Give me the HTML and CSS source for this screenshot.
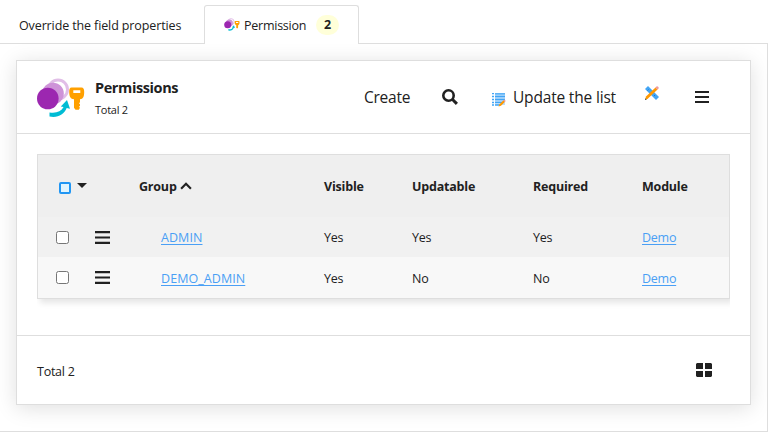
FILE: index.html
```html
<!DOCTYPE html>
<html lang="en">
<head>
<meta charset="utf-8">
<title>Permissions</title>
<link rel="stylesheet" href="styles.css">
</head>
<body>
<svg class="defs" aria-hidden="true">
  <symbol id="perm" viewBox="0 0 48 40">
    <circle cx="21" cy="11.500" r="9.500" fill="none" stroke="#e1bee7" stroke-width="3"/>
    <circle cx="16" cy="15.500" r="10.800" fill="#ce93d8"/>
    <circle cx="10.800" cy="20.500" r="10.800" fill="#9c27b0"/>
    <path d="M12.500 34.500v4c8 1.500 14.500-1.500 17.200-8.500l3.300.8-3-8.800-6.200 6.500 2.800.6c-2.500 4.700-7.500 6.400-14.100 5.400z" fill="#00bcd4"/>
    <path fill-rule="evenodd" d="M34.500 9.500h10c2 0 2.700 1.500 2.700 4.500 0 4.500-1 7-4.200 7.300v3l-1 1 1 1v1.500l-1 1 1 1-1.200 2h-3.300l-1.500-2v-8.500c-3.500-.3-4.800-2.800-4.800-7.300 0-3 .5-4.500 2.300-4.500zm1.800 2.800v2.700h7v-2.700z" fill="#ffa000"/>
  </symbol>
  <symbol id="bars" viewBox="0 0 14 12">
    <path d="M0 0h14v2H0zM0 5h14v2H0zM0 10h14v2H0z" fill="#212121"/>
  </symbol>
</svg>
<nav class="tabs">
  <div class="tab"><span class="tab-text">Override the field properties</span></div>
  <div class="tab active"><svg class="tab-icon"><use href="#perm"/></svg><span class="tab-label">Permission</span><span class="badge">2</span></div>
</nav>
<main class="panel">
  <section class="card">
    <header class="head">
      <svg class="logo"><use href="#perm"/></svg>
      <div class="titles"><h1>Permissions</h1><p>Total 2</p></div>
      <span class="action create">Create</span>
      <svg class="search" viewBox="0 0 16 16"><circle cx="6.500" cy="6.500" r="5.200" fill="none" stroke="#212121" stroke-width="2.600"/><path d="M10.300 10.300l4.600 4.600" stroke="#212121" stroke-width="3"/></svg>
      <svg class="list" viewBox="0 0 14 14"><path d="M3 0h10v12H3z" fill="#bbdefb"/><path d="M0 .5h2M0 3.500h2M0 6.500h2M0 9.500h2M0 12h2M3 .8h10M3 3.500h10M3 6.500h10M3 9.300h8M3 12h5" stroke="#42a5f5" stroke-width="1.300"/><path d="M6.500 13.500l1-2.300 4-4 1.500 1.500-4 4z" fill="#ff9800"/><path d="M11.300 7.400l1-1 1.500 1.500-1 1z" fill="#ef9a9a"/></svg>
      <span class="action update">Update the list</span>
      <svg class="tools" viewBox="0 0 14 14"><path d="M0 3l3-3 11 11-3 3z" fill="#42a5f5"/><path d="M2.500 4.500l1-1M9 10l1-1" stroke="#1976d2"/><path d="M0 14l1-3.500 9.500-9 2 2-9.500 9z" fill="#ff9800"/><path d="M10.300 1.700l1.200-1.200c1-.8 2.800.8 2 2l-1.200 1.200z" fill="#ef9a9a"/><path d="M0 14l.5-1.800 1.300 1.300z" fill="#37474f"/></svg>
      <svg class="menu"><use href="#bars"/></svg>
    </header>
    <div class="body">
      <table>
        <colgroup><col class="c-check"><col class="c-menu"><col class="c-group"><col class="c-visible"><col class="c-updatable"><col class="c-required"><col></colgroup>
        <thead><tr>
          <th colspan="2"><div class="select"><span class="select-box"></span><svg class="caret" viewBox="0 0 10 5"><path d="M0 0h10L5 5z" fill="#212121"/></svg></div></th>
          <th><span class="t-group">Group</span><svg class="sort" viewBox="0 0 11 7"><path d="M1 6l4.500-4.500L10 6" fill="none" stroke="#212121" stroke-width="2"/></svg></th>
          <th>Visible</th><th>Updatable</th><th>Required</th><th>Module</th>
        </tr></thead>
        <tbody>
          <tr><td><span class="check"></span></td><td><svg class="row-menu"><use href="#bars"/></svg></td><td class="name"><a href="#">ADMIN</a></td><td>Yes</td><td>Yes</td><td>Yes</td><td><a href="#">Demo</a></td></tr>
          <tr><td><span class="check"></span></td><td><svg class="row-menu"><use href="#bars"/></svg></td><td class="name"><a href="#">DEMO_ADMIN</a></td><td>Yes</td><td>No</td><td>No</td><td><a href="#">Demo</a></td></tr>
        </tbody>
      </table>
    </div>
    <footer class="foot"><span>Total 2</span><svg class="grid" viewBox="0 0 16 14"><path d="M1 0h6v6H0V1zM9 0h6l1 1v5H9zM0 8h7v6H1l-1-1zM9 8h7v5l-1 1H9z" fill="#212121"/></svg></footer>
  </section>
</main>
</body>
</html>
```

FILE: styles.css
```css
* { box-sizing: border-box; }
body {
  margin: 0;
  width: 776px;
  height: 441px;
  overflow: hidden;
  background: #fff;
  color: #212121;
  font: 12.5px/18px "Open Sans", "Noto Sans", sans-serif;
  letter-spacing: -0.25px;
}
svg { display: block; flex: none; }
.defs { position: absolute; width: 0; height: 0; }
.tabs {
  display: flex;
  width: 768px;
  height: 44px;
  padding-top: 5px;
  border-bottom: 1px solid #dedede;
}
.tab {
  display: flex;
  align-items: center;
  width: 204px;
  height: 39px;
  padding: 2px 0 0 19px;
  white-space: nowrap;
}
.tab.active {
  width: 155px;
  background: #fff;
  border: 1px solid #dedede;
  border-bottom: 0;
  border-radius: 3px 3px 0 0;
  padding: 0 0 0 19px;
}
.tab-text { letter-spacing: -.12px; }
.tab-icon { width: 16px; height: 13px; margin: 0 4px 2px 0; }
.tab-label { padding-top: 1px; width: 62px; }
.badge {
  width: 23px;
  height: 20px;
  margin-left: 10px;
  border-radius: 10px;
  background: #ffffd9;
  font-weight: 700;
  line-height: 20px;
  text-align: center;
}
.panel {
  width: 768px;
  height: 388px;
  padding: 16px;
  border: solid #dedede;
  border-width: 0 1px 1px 0;
  overflow: hidden;
}
.card {
  width: 735px;
  height: 345px;
  border: 1px solid #dedede;
  background: #fff;
  box-shadow: 0 3px 20px rgba(0, 0, 0, .13);
}
.head {
  display: flex;
  align-items: center;
  height: 73px;
  padding-left: 20px;
  border-bottom: 1px solid #dedede;
}
.logo { width: 48px; height: 40px; margin-top: 1px; }
.titles { width: 269px; margin-left: 10px; padding-top: 2px; }
h1 { margin: 0; font-size: 14.500px; line-height: 22px; letter-spacing: -.4px; }
p { margin: 1px 0 0; font-size: 11px; line-height: 20px; }
.action { font-size: 15.500px; line-height: 22px; white-space: nowrap; }
.create { width: 78px; }
.search { width: 16px; height: 16px; }
.list { width: 14px; height: 14px; margin: 5px 7px 0 34px; }
.update { width: 132px; letter-spacing: -.18px; }
.tools { width: 14px; height: 14px; margin-bottom: 8px; }
.menu { width: 14px; height: 12px; margin-left: 36px; }
.body {
  width: 693px;
  height: 201px;
  margin-left: 20px;
  padding-top: 20px;
  overflow: hidden;
}
table {
  width: 693px;
  table-layout: fixed;
  border-collapse: separate;
  border-spacing: 0;
  border: 1px solid #dedede;
  box-shadow: 3px 4px 6px rgba(0, 0, 0, .1);
}
.c-check { width: 57px; }
.c-menu { width: 44px; }
.c-group { width: 185px; }
.c-visible { width: 88px; }
.c-updatable { width: 121px; }
.c-required { width: 109px; }
th, td { padding: 0; text-align: left; white-space: nowrap; }
th { height: 62px; background: #efefef; padding-top: 1px; letter-spacing: -.2px; }
tbody tr { background: #f1f1f1; }
tbody tr:last-child { background: #f8f8f8; }
td { height: 40px; padding-top: 2px; }
td:nth-child(-n+2) { padding-top: 0; }
tbody tr:last-child td { height: 41px; }
a { color: #4a9ff5; text-underline-offset: 2px; }
td.name { padding-left: 22px; letter-spacing: .07px; }
.select { display: flex; padding-left: 21px; }
.select-box { width: 12px; height: 12px; margin-top: 3px; border: 2px solid #2196f3; border-radius: 2px; background: #e1f5fe; }
.caret { width: 10px; height: 5px; margin: 4px 0 0 6px; }
.sort { display: inline-block; width: 12px; height: 8px; margin-left: 3px; vertical-align: 1px; }
.check { display: block; width: 13px; height: 13px; margin-left: 18px; border: 1px solid #767676; border-radius: 2.500px; background: #fff; }
.row-menu { width: 15px; height: 13px; }
.foot {
  display: flex;
  justify-content: space-between;
  align-items: center;
  height: 69px;
  padding: 3px 38px 0 20px;
  border-top: 1px solid #dedede;
}
.grid { width: 16px; height: 14px; margin-bottom: 3px; }
```
